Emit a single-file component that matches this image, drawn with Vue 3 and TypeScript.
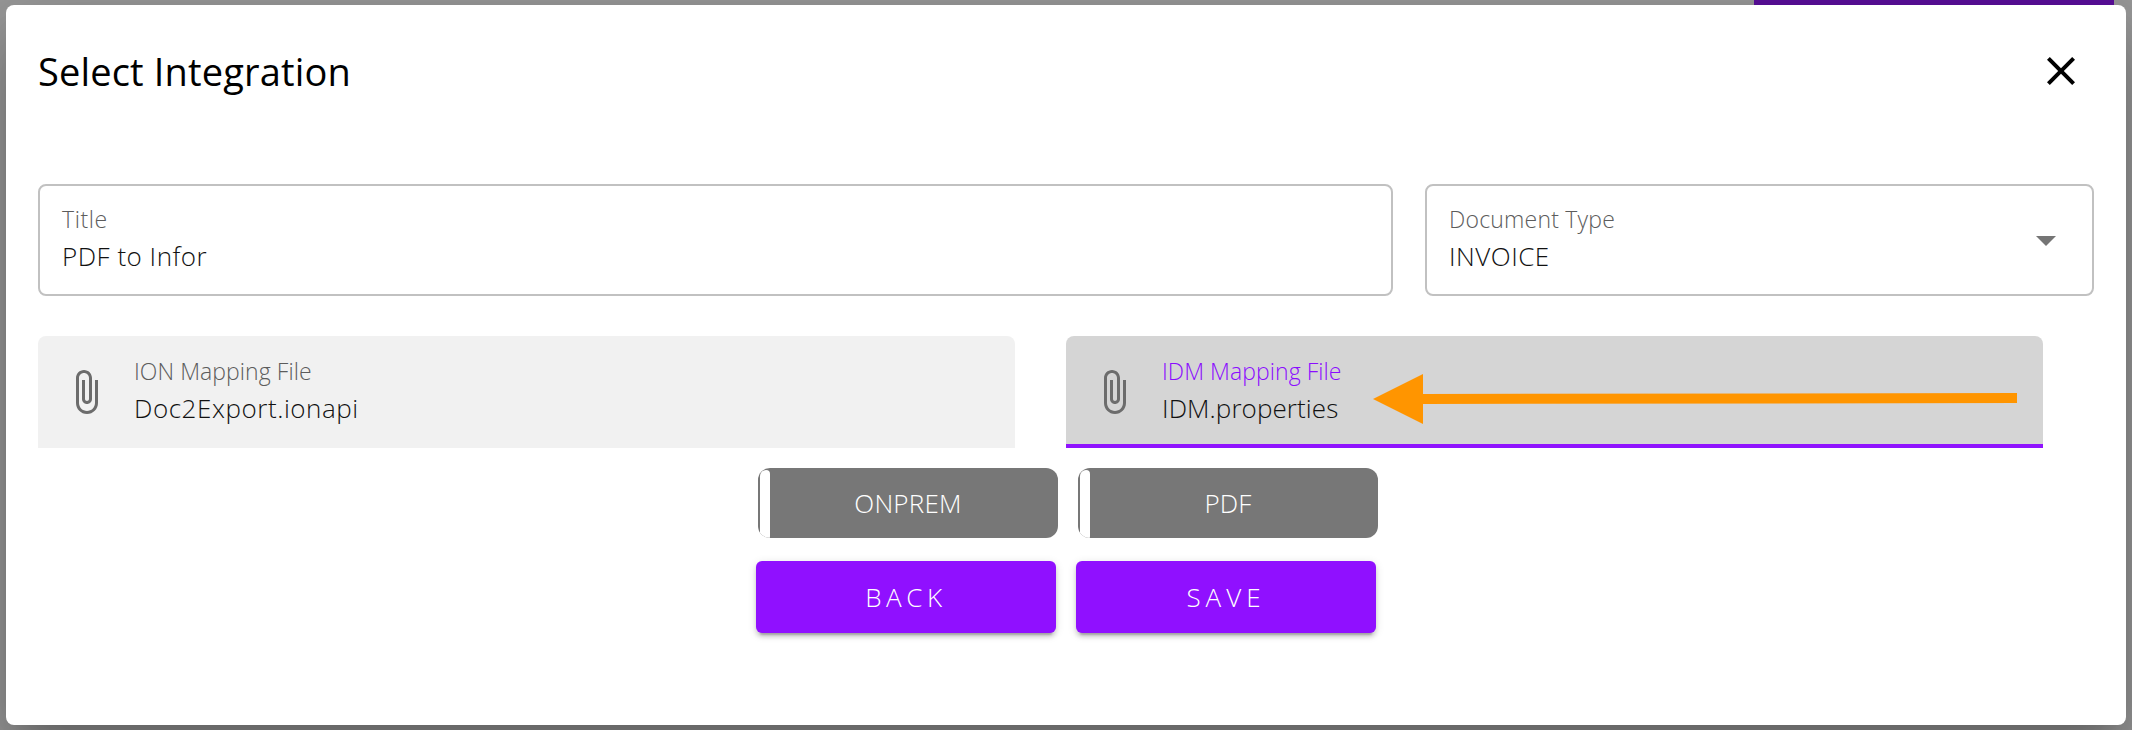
<script setup lang="ts">
interface MappingFile {
  id: string
  label: string
  value: string
  active: boolean
}

const files: MappingFile[] = [
  { id: 'ion', label: 'ION Mapping File', value: 'Doc2Export.ionapi', active: false },
  { id: 'idm', label: 'IDM Mapping File', value: 'IDM.properties', active: true },
]
const toggles = ['ONPREM', 'PDF']
const actions = ['BACK', 'SAVE']
</script>

<template>
  <div class="backdrop">
    <div class="page-accent"></div>
    <section class="dialog" role="dialog" aria-label="Select Integration">
      <header class="header">
        <h1>Select Integration</h1>
        <button class="close" type="button" aria-label="Close">
          <svg width="48" height="48" viewBox="0 0 24 24">
            <path d="M19 6.41L17.59 5 12 10.59 6.41 5 5 6.41 10.59 12 5 17.59 6.41 19 12 13.41 17.59 19 19 17.59 13.41 12z" />
          </svg>
        </button>
      </header>

      <div class="fields">
        <div class="outlined title-field">
          <span class="label title-label">Title</span>
          <span class="value title-value">PDF to Infor</span>
        </div>
        <div class="outlined type-field">
          <div>
            <span class="label type-label">Document Type</span>
            <span class="value type-value">INVOICE</span>
          </div>
          <svg class="caret" width="48" height="48" viewBox="0 0 24 24">
            <path d="M7 10l5 5 5-5z" />
          </svg>
        </div>
      </div>

      <div class="files">
        <div v-for="file in files" :key="file.id" class="file" :class="[file.id, { active: file.active }]">
          <svg class="clip" width="48" height="48" viewBox="0 0 24 24">
            <path d="M16.5 6v11.5c0 2.21-1.79 4-4 4s-4-1.79-4-4V5c0-1.38 1.12-2.5 2.5-2.5s2.5 1.12 2.5 2.5v10.5c0 .55-.45 1-1 1s-1-.45-1-1V6H10v9.5c0 1.38 1.12 2.5 2.5 2.5s2.5-1.12 2.5-2.5V5c0-2.21-1.79-4-4-4S7 2.79 7 5v12.5c0 3.04 2.46 5.5 5.5 5.5s5.5-2.46 5.5-5.5V6h-1.5z" />
          </svg>
          <div>
            <span class="label">{{ file.label }}</span>
            <span class="value">{{ file.value }}</span>
          </div>
          <svg v-if="file.active" class="arrow" width="644" height="50" viewBox="0 0 644 50">
            <path d="M0 25L50 0V20L644 19V29L50 30V50z" />
          </svg>
        </div>
      </div>

      <div class="toggles">
        <div v-for="toggle in toggles" :key="toggle" class="toggle" :class="toggle.toLowerCase()">
          <span>{{ toggle }}</span>
        </div>
      </div>
      <div class="actions">
        <button v-for="action in actions" :key="action" type="button" class="action" :class="action.toLowerCase()">
          {{ action }}
        </button>
      </div>
    </section>
  </div>
</template>

<style>
body {
  margin: 0;
  overflow: hidden;
}
</style>

<style scoped>
.backdrop {
  position: relative;
  box-sizing: border-box;
  width: 2132px;
  height: 730px;
  padding: 5px 6px;
  overflow: hidden;
  background: #999;
  font-family: "Open Sans", "Noto Sans", sans-serif;
}
.page-accent {
  position: absolute;
  top: 0;
  left: 1754px;
  width: 360px;
  height: 12px;
  background: #5a0f9b;
}
.dialog {
  position: relative;
  box-sizing: border-box;
  height: 720px;
  padding: 42px 32px 0;
  border-radius: 8px;
  background: #fff;
  box-shadow: 0 22px 30px -14px rgba(0, 0, 0, 0.2), 0 48px 76px 6px rgba(0, 0, 0, 0.14), 0 18px 92px 16px rgba(0, 0, 0, 0.12);
}
.header {
  display: flex;
  justify-content: space-between;
  height: 137px;
  padding-right: 9px;
}
h1 {
  margin: 4px 0 0;
  color: #000;
  font-size: 38px;
  font-weight: 400;
  line-height: 40px;
  letter-spacing: 0.16px;
}
button {
  margin: 0;
  padding: 0;
  border: 0;
  font-family: inherit;
}
.close {
  width: 48px;
  height: 48px;
  background: none;
}
svg {
  display: block;
}
.fields {
  display: grid;
  grid-template-columns: 1355px 669px;
  gap: 32px;
}
.outlined {
  box-sizing: border-box;
  height: 112px;
  padding: 19px 22px 0;
  border: 2px solid #c1c1c1;
  border-radius: 8px;
}
.type-field {
  display: flex;
  justify-content: space-between;
}
.caret {
  margin: 11px 0 0;
  fill: #757575;
}
.label,
.value {
  display: block;
  font-weight: 300;
  white-space: nowrap;
}
.label {
  color: #5c5c5c;
  font-size: 23px;
  line-height: 28px;
  letter-spacing: 0.12px;
}
.value {
  margin-top: 5px;
  color: #111;
  font-size: 26px;
  line-height: 36px;
  letter-spacing: 0.5px;
}
.title-label {
  letter-spacing: 0.6px;
}
.type-label {
  letter-spacing: 0.2px;
}
.files {
  display: flex;
  gap: 51px;
  margin-top: 40px;
}
.file {
  position: relative;
  box-sizing: border-box;
  display: flex;
  gap: 24px;
  width: 977px;
  height: 112px;
  padding: 21px 24px 0;
  border-radius: 8px 8px 0 0;
  background: #f1f1f1;
}
.file.active {
  border-bottom: 4px solid #9013fe;
  border-radius: 8px 8px 0 0;
  background: #d5d5d5;
}
.active .label {
  color: #8b0cff;
}
.file .label {
  letter-spacing: 0.06px;
}
.ion .value {
  letter-spacing: 0.55px;
}
.idm .value {
  letter-spacing: 0.08px;
}
.clip {
  margin-top: 11px;
  fill: #6c6c6c;
}
.arrow {
  position: absolute;
  top: 38px;
  left: 307px;
  fill: #ff9500;
}
.toggles,
.actions {
  display: flex;
  gap: 20px;
}
.toggles {
  margin: 20px 0 0 720px;
}
.actions {
  margin: 23px 0 0 718px;
}
.toggle {
  position: relative;
  width: 300px;
  height: 70px;
  border-radius: 12px;
  overflow: hidden;
  background: #777;
  color: #fff;
  font-size: 26px;
  font-weight: 300;
  line-height: 70px;
  text-align: center;
  letter-spacing: 0.2px;
}
.toggle::before {
  content: "";
  position: absolute;
  top: 2px;
  left: 2px;
  width: 10px;
  height: 70px;
  border-radius: 6px 4px 4px 0;
  background: #fff;
}
.action {
  width: 300px;
  height: 72px;
  border-radius: 6px;
  background: #9010ff;
  box-shadow: 0 6px 2px -4px rgba(0, 0, 0, 0.2), 0 4px 4px 0 rgba(0, 0, 0, 0.14), 0 2px 10px 0 rgba(0, 0, 0, 0.12);
  color: #fff;
  font-size: 26px;
  font-weight: 300;
  line-height: 72px;
  letter-spacing: 4.6px;
}
.save {
  letter-spacing: 5px;
}
</style>
